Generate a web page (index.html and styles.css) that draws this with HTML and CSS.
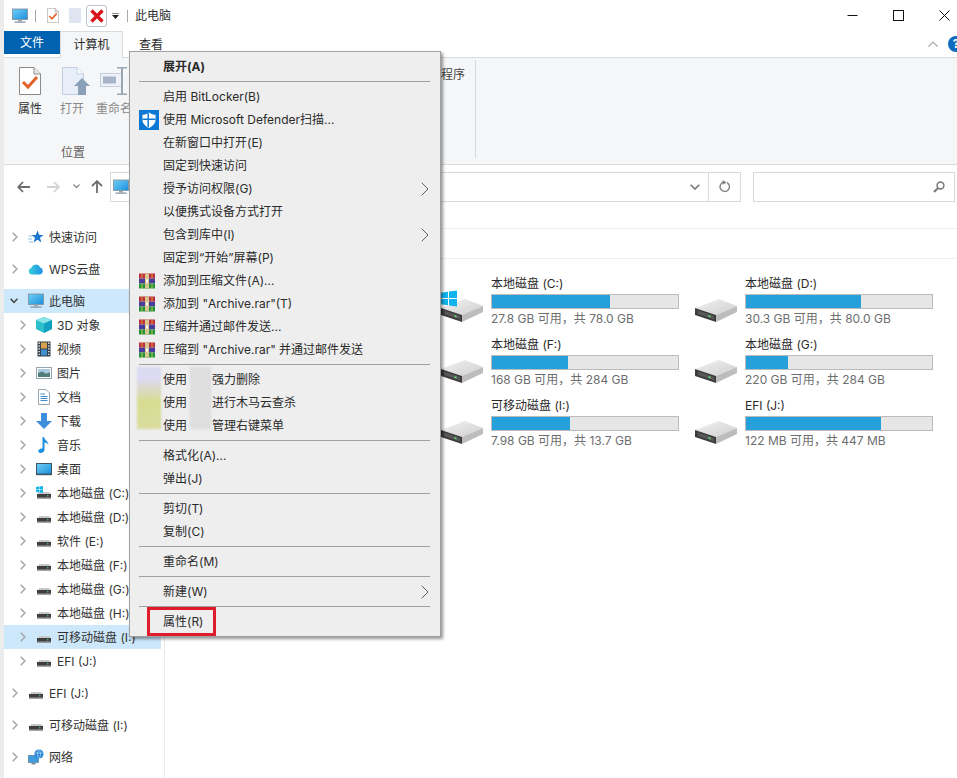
FILE: index.html
```html
<!DOCTYPE html>
<html lang="zh-CN">
<head>
<meta charset="utf-8">
<title>此电脑</title>
<link rel="stylesheet" href="styles.css">
</head>
<body>
<svg class="defs" aria-hidden="true">
  <defs>
    <linearGradient id="gScreen" x1="0" y1="0" x2="1" y2="1"><stop offset="0" stop-color="#6fd0f7"/><stop offset="1" stop-color="#1b8fdc"/></linearGradient>
    <linearGradient id="gCloud" x1="0" y1="0" x2="1" y2="0"><stop offset="0" stop-color="#35d0d8"/><stop offset="1" stop-color="#1f8fe8"/></linearGradient>
    <linearGradient id="gDriveTop" x1="0" y1="0" x2="1" y2="1"><stop offset="0" stop-color="#f2f2f2"/><stop offset="1" stop-color="#cfcfcf"/></linearGradient>
  </defs>
  <symbol id="i-monitor" viewBox="0 0 16 16">
    <rect x="0.5" y="1" width="15" height="10.5" fill="url(#gScreen)" stroke="#7d8c99" stroke-width="0.8"/>
    <rect x="6" y="11.5" width="4" height="2" fill="#9aa7b0"/>
    <rect x="2.5" y="13.5" width="11" height="1.3" fill="#8a99a5"/>
  </symbol>
  <symbol id="i-doc-check" viewBox="0 0 22 28">
    <path d="M0.5 0.5H15L21.5 7V27.5H0.5Z" fill="#fff" stroke="#8b8b8b"/>
    <path d="M15 0.5V7H21.5" fill="#e9e9e9" stroke="#8b8b8b"/>
    <path d="M4 15L9 20L18 10" fill="none" stroke="#e2622a" stroke-width="3"/>
  </symbol>
  <symbol id="i-doc-open" viewBox="0 0 28 28">
    <path d="M0.5 0.5H15L21.5 7V27.5H0.5Z" fill="#e8eef8" stroke="#c3cfe0"/>
    <path d="M15 0.5V7H21.5" fill="#f7f9fc" stroke="#c3cfe0"/>
    <path d="M20 11L28 19H24V28H16V19H12Z" fill="#8aa0b8"/>
  </symbol>
  <symbol id="i-rename" viewBox="0 0 28 28">
    <rect x="0.5" y="6.5" width="22" height="13" fill="#eef2f7" stroke="#c3cfe0"/>
    <rect x="3" y="9.5" width="13" height="7" fill="#a5b4c6"/>
    <path d="M17 0.5H27M22 0.5V27.5M17 27.5H27" fill="none" stroke="#9aa6b3" stroke-width="2"/>
  </symbol>
  <symbol id="i-star" viewBox="0 0 16 16">
    <path d="M9.5 1.5L11.2 6H15.5L12 8.8L13.4 13.5L9.5 10.7L5.6 13.5L7 8.8L3.5 6H7.8Z" fill="#1c78cf"/>
    <path d="M0.5 7H4M0 10H4M1 13H5" stroke="#86c2ee" stroke-width="1"/>
  </symbol>
  <symbol id="i-cloud" viewBox="0 0 16 16">
    <path d="M4 13.5A3.3 3.3 0 0 1 3.3 7A4.6 4.6 0 0 1 12 6.5A3.6 3.6 0 0 1 12 13.5Z" fill="url(#gCloud)"/>
  </symbol>
  <symbol id="i-cube" viewBox="0 0 16 16">
    <path d="M8 0L16 3V12L8 16L0 12V3Z" fill="#2cc0cf"/>
    <path d="M8 0L16 3L8 6.5L0 3Z" fill="#8ce4e8"/>
    <path d="M8 6.5L16 3V12L8 16Z" fill="#12a0c0"/>
  </symbol>
  <symbol id="i-film" viewBox="0 0 16 16">
    <rect x="1.5" y="0.5" width="13" height="15" fill="#333f4a"/>
    <rect x="5" y="1.5" width="6" height="6" fill="#d8a24a"/>
    <rect x="5" y="8.5" width="6" height="6" fill="#3f8fd0"/>
    <path d="M3.2 1.5V14.5M12.8 1.5V14.5" stroke="#e8e8e8" stroke-width="1.4" stroke-dasharray="1.4 1.4"/>
  </symbol>
  <symbol id="i-pic" viewBox="0 0 16 16">
    <rect x="0.5" y="2.5" width="15" height="11" fill="#fff" stroke="#97a3ad"/>
    <rect x="2" y="4" width="12" height="4" fill="#a8cbe0"/>
    <path d="M2 8L6 6.5L10 8.5L14 7.5V12H2Z" fill="#4f7f78"/>
  </symbol>
  <symbol id="i-doc" viewBox="0 0 16 16">
    <path d="M2.5 0.5H10L13.5 4V15.5H2.5Z" fill="#fff" stroke="#97a3ad"/>
    <path d="M4.5 5H9M4.5 7.5H11.5M4.5 9.5H11.5M4.5 11.5H11.5" stroke="#3f8fd0"/>
  </symbol>
  <symbol id="i-down" viewBox="0 0 16 16">
    <path d="M5 0H11V8H16L8 16L0 8H5Z" fill="#3d8fdc"/>
  </symbol>
  <symbol id="i-note" viewBox="0 0 16 16">
    <path d="M6.5 0H8C8.3 3 12.5 4 12.5 8.5C12 6.5 10.5 5.8 8.5 5.5V12.5C8.5 14.5 6.5 16 4.5 16C2.5 16 1.8 14.6 2.5 13.3C3.3 11.9 5.3 11.2 6.5 11.6Z" fill="#1f8fe0"/>
  </symbol>
  <symbol id="i-desktop" viewBox="0 0 16 16">
    <rect x="0.5" y="2.5" width="15" height="10.5" fill="url(#gScreen)" stroke="#3d5566"/>
    <rect x="0" y="13" width="16" height="1.2" fill="#3d5566"/>
  </symbol>
  <symbol id="i-drive" viewBox="0 0 16 16">
    <path d="M1.5 9L3.5 7H13L14.8 9Z" fill="#c9c9c9"/>
    <rect x="1" y="9" width="14" height="4.4" fill="#3f3f3f"/>
    <rect x="1" y="12.3" width="14" height="1.1" fill="#8a8a8a"/>
    <rect x="11" y="10.2" width="1.4" height="1.2" fill="#52d070"/>
  </symbol>
  <symbol id="i-drive-large" viewBox="0 0 42 24">
    <path d="M0 9L24 0L42 7L21 16Z" fill="url(#gDriveTop)"/>
    <path d="M0 9L21 16V23L0 16Z" fill="#3c3c3c"/>
    <path d="M3 11.5L19 17V20.5L3 15Z" fill="#585858"/>
    <path d="M21 16L42 7V13L21 23Z" fill="#bdbdbd"/>
    <path d="M13.5 16L15.5 16.7V18.4L13.5 17.7Z" fill="#5fe07a"/>
  </symbol>
  <symbol id="i-win" viewBox="0 0 16 16">
    <path d="M0 2.3L7 1.2V7.5H0ZM8 1L16 0V7.5H8ZM0 8.5H7V14.8L0 13.7ZM8 8.5H16V16L8 15Z" fill="#12b4ee"/>
  </symbol>
  <symbol id="i-net" viewBox="0 0 16 16">
    <rect x="0.5" y="6.5" width="10" height="7" fill="#3d9be0" stroke="#5a7a92" stroke-width="0.7"/>
    <rect x="3.5" y="14" width="4" height="1.5" fill="#7a8d9b"/>
    <circle cx="11" cy="5" r="4.6" fill="#2f86d6"/>
    <path d="M7.5 4H14.5M11 0.5C9 3 9 7 11 9.5M11 0.5C13 3 13 7 11 9.5" stroke="#a8dcf5" stroke-width="0.7" fill="none"/>
  </symbol>
  <symbol id="i-rar" viewBox="0 0 16 16">
    <rect x="0" y="0.5" width="16" height="5" fill="#b9303f"/>
    <rect x="0" y="5.5" width="16" height="5" fill="#4a3c9c"/>
    <rect x="0" y="10.5" width="16" height="5" fill="#24913f"/>
    <rect x="6" y="0.5" width="4" height="15" fill="#d8c690"/>
    <rect x="7" y="6.5" width="2" height="3" fill="#fff"/>
    <path d="M3 0.5V5.5M13 0.5V5.5" stroke="#e8a838" stroke-width="0.9"/>
    <path d="M3 10.5V15.5M13 10.5V15.5" stroke="#d8d050" stroke-width="0.9"/>
  </symbol>
  <symbol id="i-shield" viewBox="0 0 20 20">
    <rect width="20" height="20" fill="#0a78d4"/>
    <path d="M10 2.5C12.3 4.2 14.5 4.8 16.5 4.8V10C16.5 13.5 13.8 16 10 18C6.2 16 3.5 13.5 3.5 10V4.8C5.5 4.8 7.7 4.2 10 2.5Z" fill="#fff"/>
    <path d="M9.2 3V17M3.5 9.3H16.5" stroke="#0a78d4" stroke-width="1.5"/>
  </symbol>
  <symbol id="i-chev" viewBox="0 0 6 10">
    <path d="M0.7 0.7L5 5L0.7 9.3" fill="none" stroke="#a6a6a6" stroke-width="1.5"/>
  </symbol>
  <symbol id="i-sub" viewBox="0 0 8 14">
    <path d="M0.7 0.7L7 7L0.7 13.3" fill="none" stroke="#5f5f5f" stroke-width="1"/>
  </symbol>
</svg>

<div class="page">
  <div class="desk-strip"></div>
  <div class="window">

    <header class="titlebar">
      <svg class="qat-monitor"><use href="#i-monitor"/></svg>
      <span class="qat-sep"></span>
      <svg class="qat-doc"><use href="#i-doc-check"/></svg>
      <span class="qat-blank"></span>
      <span class="qat-x">
        <svg width="14" height="14" viewBox="0 0 14 14"><path d="M1.5 1.5L12.5 12.5M12.5 1.5L1.5 12.5" stroke="#d8141c" stroke-width="3.4"/></svg>
      </span>
      <svg class="qat-drop" width="7" height="6" viewBox="0 0 7 6"><path d="M0 0H7" stroke="#222"/><path d="M0 2L7 2L3.5 6Z" fill="#222"/></svg>
      <span class="qat-sep qat-sep-2"></span>
      <span class="title-text">此电脑</span>
      <div class="win-controls">
        <svg width="11" height="11" viewBox="0 0 11 11"><path d="M0.5 5.5H10.5" stroke="#111"/></svg>
        <svg width="11" height="11" viewBox="0 0 11 11"><rect x="0.5" y="0.5" width="10" height="10" fill="none" stroke="#111"/></svg>
        <svg width="11" height="11" viewBox="0 0 11 11"><path d="M0.5 0.5L10.5 10.5M10.5 0.5L0.5 10.5" stroke="#111"/></svg>
      </div>
    </header>

    <nav class="tabs">
      <span class="tab tab-file">文件</span>
      <span class="tab tab-active">计算机</span>
      <span class="tab tab-plain">查看</span>
      <span class="tabs-right">
        <svg width="10" height="6" viewBox="0 0 10 6"><path d="M0.5 5.5L5 1L9.5 5.5" fill="none" stroke="#a8a8a8" stroke-width="1.2"/></svg>
        <span class="help-dot">?</span>
      </span>
    </nav>

    <section class="ribbon">
      <div class="rb-group">
        <div class="rb-buttons">
          <div class="rb-btn"><svg class="rb-icon"><use href="#i-doc-check"/></svg><span>属性</span></div>
          <div class="rb-btn"><svg class="rb-icon"><use href="#i-doc-open"/></svg><span class="rb-dim">打开</span></div>
          <div class="rb-btn"><svg class="rb-icon"><use href="#i-rename"/></svg><span class="rb-dim">重命名</span></div>
        </div>
        <div class="rb-label">位置</div>
      </div>
      <div class="rb-group-2">程序</div>
    </section>

    <section class="addressbar">
      <div class="nav-arrows">
        <svg width="13" height="12" viewBox="0 0 13 12"><path d="M6 1L1.2 6L6 11M1.5 6H13" fill="none" stroke="#6d6d6d" stroke-width="1.8"/></svg>
        <svg width="13" height="12" viewBox="0 0 13 12"><path d="M7 1L11.8 6L7 11M11.5 6H0" fill="none" stroke="#d2d2d2" stroke-width="1.8"/></svg>
        <svg width="7" height="5" viewBox="0 0 7 5"><path d="M0.5 0.5L3.5 3.5L6.5 0.5" fill="none" stroke="#8a8a8a" stroke-width="1.3"/></svg>
        <svg width="12" height="13" viewBox="0 0 12 13"><path d="M1 6L6 1.2L11 6M6 1.5V13" fill="none" stroke="#6d6d6d" stroke-width="1.8"/></svg>
      </div>
      <div class="address-box">
        <svg class="addr-icon"><use href="#i-monitor"/></svg>
        <svg class="addr-drop" width="10" height="6" viewBox="0 0 10 6"><path d="M0.7 0.7L5 5L9.3 0.7" fill="none" stroke="#777" stroke-width="1.6"/></svg>
        <span class="addr-refresh">
          <svg width="12" height="13" viewBox="0 0 12 13"><path d="M4.5 2.2A4.7 4.7 0 1 0 8 2.6" fill="none" stroke="#808080" stroke-width="1.4"/><path d="M3.6 0L7.6 2.6L3.6 4.8Z" fill="#808080"/></svg>
        </span>
      </div>
      <div class="search-box">
        <svg width="12" height="12" viewBox="0 0 12 12"><circle cx="7.5" cy="4.5" r="3.4" fill="none" stroke="#777" stroke-width="1.5"/><path d="M5 7L1 11" stroke="#777" stroke-width="2"/></svg>
      </div>
    </section>

    <main class="main">
      <aside class="sidebar">
        <div class="nav-group">
          <div class="row"><svg class="chev"><use href="#i-chev"/></svg><svg class="ico"><use href="#i-star"/></svg><span class="label">快速访问</span></div>
        </div>
        <div class="nav-group">
          <div class="row"><svg class="chev"><use href="#i-chev"/></svg><svg class="ico"><use href="#i-cloud"/></svg><span class="label">WPS云盘</span></div>
        </div>
        <div class="nav-group">
          <div class="row row-on"><svg class="chev-open" width="8" height="6" viewBox="0 0 8 6"><path d="M0.6 0.8L4 4.4L7.4 0.8" fill="none" stroke="#404040" stroke-width="1.5"/></svg><svg class="ico"><use href="#i-monitor"/></svg><span class="label">此电脑</span></div>
          <div class="row lvl"><svg class="chev"><use href="#i-chev"/></svg><svg class="ico"><use href="#i-cube"/></svg><span class="label">3D 对象</span></div>
          <div class="row lvl"><svg class="chev"><use href="#i-chev"/></svg><svg class="ico"><use href="#i-film"/></svg><span class="label">视频</span></div>
          <div class="row lvl"><svg class="chev"><use href="#i-chev"/></svg><svg class="ico"><use href="#i-pic"/></svg><span class="label">图片</span></div>
          <div class="row lvl"><svg class="chev"><use href="#i-chev"/></svg><svg class="ico"><use href="#i-doc"/></svg><span class="label">文档</span></div>
          <div class="row lvl"><svg class="chev"><use href="#i-chev"/></svg><svg class="ico"><use href="#i-down"/></svg><span class="label">下载</span></div>
          <div class="row lvl"><svg class="chev"><use href="#i-chev"/></svg><svg class="ico"><use href="#i-note"/></svg><span class="label">音乐</span></div>
          <div class="row lvl"><svg class="chev"><use href="#i-chev"/></svg><svg class="ico"><use href="#i-desktop"/></svg><span class="label">桌面</span></div>
          <div class="row lvl"><svg class="chev"><use href="#i-chev"/></svg><span class="ico-wrap"><svg class="ico"><use href="#i-drive"/></svg><svg class="ico-win"><use href="#i-win"/></svg></span><span class="label">本地磁盘 (C:)</span></div>
          <div class="row lvl"><svg class="chev"><use href="#i-chev"/></svg><svg class="ico"><use href="#i-drive"/></svg><span class="label">本地磁盘 (D:)</span></div>
          <div class="row lvl"><svg class="chev"><use href="#i-chev"/></svg><svg class="ico"><use href="#i-drive"/></svg><span class="label">软件 (E:)</span></div>
          <div class="row lvl"><svg class="chev"><use href="#i-chev"/></svg><svg class="ico"><use href="#i-drive"/></svg><span class="label">本地磁盘 (F:)</span></div>
          <div class="row lvl"><svg class="chev"><use href="#i-chev"/></svg><svg class="ico"><use href="#i-drive"/></svg><span class="label">本地磁盘 (G:)</span></div>
          <div class="row lvl"><svg class="chev"><use href="#i-chev"/></svg><svg class="ico"><use href="#i-drive"/></svg><span class="label">本地磁盘 (H:)</span></div>
          <div class="row lvl row-on"><svg class="chev"><use href="#i-chev"/></svg><svg class="ico"><use href="#i-drive"/></svg><span class="label">可移动磁盘 (I:)</span></div>
          <div class="row lvl"><svg class="chev"><use href="#i-chev"/></svg><svg class="ico"><use href="#i-drive"/></svg><span class="label">EFI (J:)</span></div>
        </div>
        <div class="nav-group">
          <div class="row"><svg class="chev"><use href="#i-chev"/></svg><svg class="ico"><use href="#i-drive"/></svg><span class="label">EFI (J:)</span></div>
        </div>
        <div class="nav-group">
          <div class="row"><svg class="chev"><use href="#i-chev"/></svg><svg class="ico"><use href="#i-drive"/></svg><span class="label">可移动磁盘 (I:)</span></div>
        </div>
        <div class="nav-group">
          <div class="row"><svg class="chev"><use href="#i-chev"/></svg><svg class="ico"><use href="#i-net"/></svg><span class="label">网络</span></div>
        </div>
      </aside>

      <section class="content">
        <div class="rule-a"></div>
        <div class="rule-b"></div>
        <div class="drives">
          <article class="tile">
            <span class="tile-icon"><svg class="drive-lg"><use href="#i-drive-large"/></svg><svg class="win-badge"><use href="#i-win"/></svg></span>
            <div class="tile-body"><div class="tile-name">本地磁盘 (C:)</div><div class="bar"><i style="width:63.3%"></i></div><div class="tile-free">27.8 GB 可用，共 78.0 GB</div></div>
          </article>
          <article class="tile">
            <span class="tile-icon"><svg class="drive-lg"><use href="#i-drive-large"/></svg></span>
            <div class="tile-body"><div class="tile-name">本地磁盘 (D:)</div><div class="bar"><i style="width:61.9%"></i></div><div class="tile-free">30.3 GB 可用，共 80.0 GB</div></div>
          </article>
          <article class="tile">
            <span class="tile-icon"><svg class="drive-lg"><use href="#i-drive-large"/></svg></span>
            <div class="tile-body"><div class="tile-name">本地磁盘 (F:)</div><div class="bar"><i style="width:40.6%"></i></div><div class="tile-free">168 GB 可用，共 284 GB</div></div>
          </article>
          <article class="tile">
            <span class="tile-icon"><svg class="drive-lg"><use href="#i-drive-large"/></svg></span>
            <div class="tile-body"><div class="tile-name">本地磁盘 (G:)</div><div class="bar"><i style="width:22.5%"></i></div><div class="tile-free">220 GB 可用，共 284 GB</div></div>
          </article>
          <article class="tile">
            <span class="tile-icon"><svg class="drive-lg"><use href="#i-drive-large"/></svg></span>
            <div class="tile-body"><div class="tile-name">可移动磁盘 (I:)</div><div class="bar"><i style="width:41.7%"></i></div><div class="tile-free">7.98 GB 可用，共 13.7 GB</div></div>
          </article>
          <article class="tile">
            <span class="tile-icon"><svg class="drive-lg"><use href="#i-drive-large"/></svg></span>
            <div class="tile-body"><div class="tile-name">EFI (J:)</div><div class="bar"><i style="width:72.7%"></i></div><div class="tile-free">122 MB 可用，共 447 MB</div></div>
          </article>
        </div>
      </section>
    </main>
  </div>

  <div class="menu">
    <div class="mi mi-bold"><span class="mi-ic"></span>展开(A)</div>
    <div class="msep"></div>
    <div class="mi"><span class="mi-ic"></span>启用 BitLocker(B)</div>
    <div class="mi"><span class="mi-ic"><svg class="shield"><use href="#i-shield"/></svg></span>使用 Microsoft Defender扫描...</div>
    <div class="mi"><span class="mi-ic"></span>在新窗口中打开(E)</div>
    <div class="mi"><span class="mi-ic"></span>固定到快速访问</div>
    <div class="mi"><span class="mi-ic"></span>授予访问权限(G)<svg class="sub"><use href="#i-sub"/></svg></div>
    <div class="mi"><span class="mi-ic"></span>以便携式设备方式打开</div>
    <div class="mi"><span class="mi-ic"></span>包含到库中(I)<svg class="sub"><use href="#i-sub"/></svg></div>
    <div class="mi"><span class="mi-ic"></span>固定到“开始”屏幕(P)</div>
    <div class="mi"><span class="mi-ic"><svg class="rar"><use href="#i-rar"/></svg></span>添加到压缩文件(A)...</div>
    <div class="mi"><span class="mi-ic"><svg class="rar"><use href="#i-rar"/></svg></span>添加到 "Archive.rar"(T)</div>
    <div class="mi"><span class="mi-ic"><svg class="rar"><use href="#i-rar"/></svg></span>压缩并通过邮件发送...</div>
    <div class="mi"><span class="mi-ic"><svg class="rar"><use href="#i-rar"/></svg></span>压缩到 "Archive.rar" 并通过邮件发送</div>
    <div class="msep"></div>
    <div class="masked-group">
      <span class="blur-icon"></span>
      <span class="blur-name"></span>
      <div class="mi"><span class="mi-ic"></span>使用<span class="masked">强力删除</span></div>
      <div class="mi"><span class="mi-ic"></span>使用<span class="masked">进行木马云查杀</span></div>
      <div class="mi"><span class="mi-ic"></span>使用<span class="masked">管理右键菜单</span></div>
    </div>
    <div class="msep"></div>
    <div class="mi"><span class="mi-ic"></span>格式化(A)...</div>
    <div class="mi"><span class="mi-ic"></span>弹出(J)</div>
    <div class="msep"></div>
    <div class="mi"><span class="mi-ic"></span>剪切(T)</div>
    <div class="mi"><span class="mi-ic"></span>复制(C)</div>
    <div class="msep"></div>
    <div class="mi"><span class="mi-ic"></span>重命名(M)</div>
    <div class="msep"></div>
    <div class="mi"><span class="mi-ic"></span>新建(W)<svg class="sub"><use href="#i-sub"/></svg></div>
    <div class="msep"></div>
    <div class="mi mi-marked"><span class="mi-ic"></span>属性(R)<span class="red-box"></span></div>
  </div>
</div>
</body>
</html>
```

FILE: styles.css
```css
* { box-sizing: border-box; }
html, body { margin: 0; padding: 0; }
body {
  width: 957px;
  height: 778px;
  overflow: hidden;
  background: #fff;
  color: #2a2a2a;
  font: 12px/16px Inter, "Noto Sans CJK SC", sans-serif;
}
.defs { position: absolute; width: 0; height: 0; }
svg { display: block; flex: none; }

.page { position: relative; display: flex; width: 957px; height: 778px; overflow: hidden; }
.desk-strip { width: 4px; background: #ececec; }
.window { flex: 1; min-width: 0; display: flex; flex-direction: column; background: #fff; }

/* title bar */
.titlebar { display: flex; align-items: center; height: 31px; padding-left: 8px; }
.qat-monitor { width: 16px; height: 16px; }
.qat-sep { width: 1px; height: 12px; margin-left: 7px; background: #a8a8a8; }
.qat-doc { width: 12px; height: 15px; margin-left: 11px; }
.qat-blank { width: 12px; height: 15px; margin-left: 10px; background: #dfe6f1; }
.qat-x {
  display: flex; align-items: center; justify-content: center;
  width: 21px; height: 22px; margin-left: 5px;
  border: 1px solid #b9c4cf; border-radius: 3px;
}
.qat-drop { margin-left: 5px; }
.qat-sep-2 { margin-left: 8px; }
.title-text { margin-left: 7px; color: #333; }
.win-controls { display: flex; gap: 35px; margin-left: auto; margin-right: 7px; }

/* tabs */
.tabs { display: flex; align-items: stretch; height: 26px; position: relative; }
.tab { display: flex; align-items: center; justify-content: center; }
.tab-file { width: 56px; height: 23px; background: #0063b1; color: #fff; }
.tab-active {
  width: 63px; height: 27px;
  background: #f5f6f7;
  border: 1px solid #dadbdc; border-bottom: 0;
  position: relative; z-index: 1;
}
.tab-plain { margin-left: 16px; height: 26px; padding-top: 1px; }
.tabs-right { display: flex; align-items: center; gap: 10px; margin-left: auto; margin-right: -7px; height: 26px; }
.help-dot {
  width: 16px; height: 16px; border-radius: 50%;
  background: #0f6cbd; color: #fff; font-weight: 700;
  display: flex; align-items: center; justify-content: center;
}

/* ribbon */
.ribbon { display: flex; height: 108px; background: #f5f6f7; border-top: 1px solid #dadbdc; border-bottom: 1px solid #dadbdc; }
.rb-group { width: 138px; display: flex; flex-direction: column; }
.rb-buttons { display: flex; padding: 9px 0 0 11px; gap: 12px; flex: 1; }
.rb-btn { display: flex; flex-direction: column; align-items: center; width: 30px; color: #333; }
.rb-btn span { margin-top: 6px; white-space: nowrap; }
.rb-icon { width: 28px; height: 28px; }
.rb-btn:first-child .rb-icon { width: 22px; }
.rb-btn:nth-child(2) .rb-icon { margin-left: 7px; }
.rb-dim { color: #8a8a8a; }
.rb-label { text-align: center; color: #5e5e5e; padding-bottom: 3px; }
.rb-group-2 { margin-left: 299px; width: 35px; height: 98px; margin-top: 2px; padding-top: 7px; border-right: 1px solid #d8d8d8; color: #444; }

/* address */
.addressbar { display: flex; align-items: center; height: 45px; padding: 0 2px 0 13px; }
.nav-arrows { display: flex; align-items: center; width: 93px; margin-top: -2px; }
.nav-arrows svg:nth-child(2) { margin-left: 17px; }
.nav-arrows svg:nth-child(3) { margin-left: 13px; }
.nav-arrows svg:nth-child(4) { margin-left: 11px; }
.address-box {
  display: flex; align-items: center;
  width: 631px; height: 30px; margin-bottom: 2px;
  border: 1px solid #d9d9d9;
}
.addr-icon { width: 16px; height: 16px; margin-left: 2px; }
.addr-drop { margin-left: auto; margin-right: 8px; }
.addr-refresh { display: flex; align-items: center; justify-content: center; width: 32px; height: 100%; border-left: 1px solid #d9d9d9; }
.search-box {
  display: flex; align-items: center; justify-content: flex-end;
  width: 202px; height: 30px; margin-left: 12px; margin-bottom: 2px; padding-right: 9px;
  border: 1px solid #d9d9d9;
}

/* main */
.main { display: flex; flex: 1; min-height: 0; }
.sidebar { width: 161px; padding: 15px 3px 0 0; border-right: 1px solid #eaeaea; flex: none; }
.nav-group { margin-bottom: 8px; }
.row {
  display: flex; align-items: center; height: 24px;
  padding-left: 8px; white-space: nowrap; color: #333;
}
.label { padding-top: 1px; }
.row.lvl { padding-left: 16px; }
.row-on { background: #cde8fb; }
.chev { width: 6px; height: 10px; margin-right: 10px; }
.chev-open { margin-right: 10px; margin-left: -2px; }
.ico { width: 16px; height: 16px; margin-right: 5px; }
.ico-wrap { position: relative; width: 16px; height: 16px; margin-right: 5px; }
.ico-win { position: absolute; left: 0; top: 1px; width: 7px; height: 7px; }

.content { flex: 1; min-width: 0; }
.rule-a { height: 19px; border-bottom: 1px solid #efefef; }
.rule-b { height: 30px; border-bottom: 1px solid #efefef; }
.drives {
  display: grid;
  grid-template-columns: repeat(2, 254px);
  grid-auto-rows: 61px;
  padding: 14px 0 0 272px;
}
.tile { display: flex; }
.tile-icon { position: relative; width: 54px; padding-left: 4px; }
.drive-lg { width: 42px; height: 24px; margin-top: 26px; }
.win-badge { position: absolute; left: 4px; top: 17px; width: 16px; height: 17px; }
.tile-body { width: 188px; }
.tile-name { height: 20px; line-height: 22px; color: #2a2a2a; }
.bar { height: 15px; margin-top: 1px; border: 1px solid #bcbcbc; background: #e6e6e6; }
.bar i { display: block; height: 100%; background: #26a0da; }
.tile-free { height: 19px; line-height: 19px; color: #6d6d6d; white-space: nowrap; }

/* context menu */
.menu {
  position: absolute; left: 129px; top: 51px;
  width: 312px; height: 586px; padding: 3px 0;
  background: #eeeeee;
  border: 1px solid #a0a0a0;
  box-shadow: 2px 2px 3px rgba(0, 0, 0, .42);
  color: #2a2a2a;
}
.mi { position: relative; display: flex; align-items: center; height: 23px; padding-left: 9px; white-space: nowrap; }
.mi-bold { font-weight: 700; }
.mi-ic { display: flex; align-items: center; width: 24px; height: 100%; flex: none; }
.msep { height: 1px; margin: 3px 10px 3px 9px; background: #a0a0a0; }
.sub { position: absolute; right: 11px; top: 5px; width: 8px; height: 14px; }
.shield { width: 20px; height: 20px; }
.rar { width: 16px; height: 16px; }
.masked { margin-left: 25px; }
.masked-group { position: relative; }
.blur-icon {
  position: absolute; left: 7px; top: -1px; width: 24px; height: 62px;
  background: linear-gradient(#dcdaf2 0, #dcdaf2 20%, #d8dc92 55%, #dadca0 100%);
  filter: blur(.8px);
}
.blur-name {
  position: absolute; left: 60px; top: -1px; width: 21px; height: 62px;
  background: #dedede;
  filter: blur(.8px);
}
.red-box {
  position: absolute; left: 17px; top: -3px; width: 69px; height: 29px;
  border: 3px solid #e01b2c;
}
```
